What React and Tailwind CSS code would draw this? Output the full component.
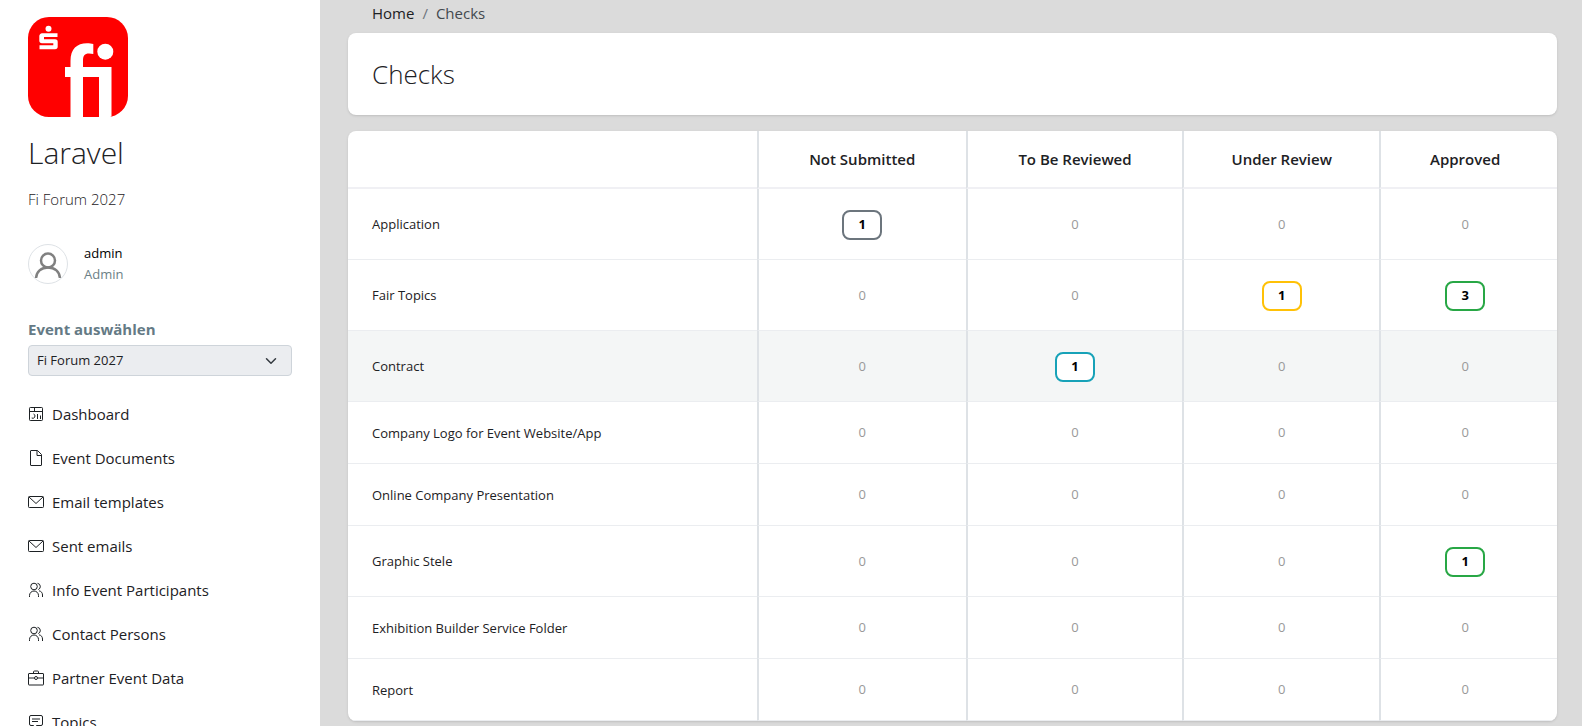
function DashboardIcon() {
    return (
        <svg className="size-4 shrink-0" viewBox="0 0 16 16" fill="none" stroke="currentColor" aria-hidden="true">
            <rect x="1.5" y="1.5" width="13" height="13" rx="0.8" />
            <path d="M1.5 5.5h13M6.5 1.5v4" />
            <path d="M5.5 8a2.2 2.2 0 1 1-1.8 4M9.5 8v5M12.5 9.500V13" />
        </svg>
    )
}

function FileIcon() {
    return (
        <svg className="size-4 shrink-0" viewBox="0 0 16 16" fill="none" stroke="currentColor" strokeLinejoin="round" aria-hidden="true">
            <path d="M9.500 0.500h-6.500a.5.5 0 0 0-.5.5v14a.5.5 0 0 0 .5.5h10a.5.5 0 0 0 .5-.5V4.500zM9 0.500V5.500h4.500" />
        </svg>
    )
}

function MailIcon() {
    return (
        <svg className="size-4 shrink-0" viewBox="0 0 16 16" fill="none" stroke="currentColor" aria-hidden="true">
            <rect x="0.5" y="2.500" width="15" height="11" rx="0.8" />
            <path d="m1 3 7 6.500L15 3" />
        </svg>
    )
}

function UsersIcon() {
    return (
        <svg className="size-4 shrink-0" viewBox="0 0 16 16" fill="none" stroke="currentColor" aria-hidden="true">
            <circle cx="6" cy="4.5" r="3.3" />
            <path d="M1.5 15v-1.500a4.500 4.500 0 0 1 9 0V15" />
            <path d="M9.500 1.300a3.300 3.300 0 0 1 .8 6.300M11 8.800c2.300.5 3.500 2 3.500 4.200v2" />
        </svg>
    )
}

function BriefcaseIcon() {
    return (
        <svg className="size-4 shrink-0" viewBox="0 0 16 16" fill="none" stroke="currentColor" aria-hidden="true">
            <rect x="0.5" y="3.500" width="15" height="11.500" rx="0.5" />
            <path d="M5.500 3.500V2a1 1 0 0 1 1-1h3a1 1 0 0 1 1 1v1.500M0.5 8h6M9.500 8h6" />
            <circle cx="8" cy="8" r="1.500" />
        </svg>
    )
}

function ChatIcon() {
    return (
        <svg className="size-4 shrink-0" viewBox="0 0 16 16" fill="none" stroke="currentColor" aria-hidden="true">
            <path d="M3 1.500h10A1.500 1.500 0 0 1 14.500 3v7A1.500 1.500 0 0 1 13 11.500H8.500L5.500 14.500v-3H3A1.500 1.500 0 0 1 1.500 10V3A1.500 1.500 0 0 1 3 1.500z" />
            <path d="M4 5h8M4 7.500h6" />
        </svg>
    )
}

function Logo() {
    return (
        <svg className="size-[100px]" viewBox="0 0 100 100" role="img" aria-label="Logo">
            <rect width="100" height="100" rx="21" fill="#ff0000" />
            <g fill="#ffffff">
                <circle cx="20.500" cy="11.700" r="3" />
                <path d="M14.500 16.300H29.500V20H16V22.200H27A2.700 2.700 0 0 1 29.700 25V29.500A2.700 2.700 0 0 1 27 32.200H11.500V28.300H25.300V26.200H14A2.700 2.700 0 0 1 11.300 23.500V19A2.700 2.700 0 0 1 14.500 16.300Z" />
                <circle cx="77.300" cy="34.700" r="8" />
                <path d="M42.500 100V60H37V50H42.500V44C42.500 32 49 26.300 59 26.300C61.500 26.300 63.500 26.500 65.300 27V37C64 36.700 62.500 36.500 61 36.500C56.500 36.500 55 39 55 43.500V50H83.500V99.500L82 100H71V60H55V100Z" />
            </g>
        </svg>
    )
}

const menu = [
    { label: 'Dashboard', Icon: DashboardIcon },
    { label: 'Event Documents', Icon: FileIcon },
    { label: 'Email templates', Icon: MailIcon },
    { label: 'Sent emails', Icon: MailIcon },
    { label: 'Info Event Participants', Icon: UsersIcon },
    { label: 'Contact Persons', Icon: UsersIcon },
    { label: 'Partner Event Data', Icon: BriefcaseIcon },
    { label: 'Topics', Icon: ChatIcon },
]

const columns = ['Not Submitted', 'To Be Reviewed', 'Under Review', 'Approved']

// One border colour per status column
const badgeColors = ['border-[#6c757d]', 'border-[#17a2b8]', 'border-[#ffc107]', 'border-[#28a745]']

const rows = [
    { name: 'Application', counts: [1, 0, 0, 0] },
    { name: 'Fair Topics', counts: [0, 0, 1, 3] },
    { name: 'Contract', counts: [0, 1, 0, 0], active: true },
    { name: 'Company Logo for Event Website/App', counts: [0, 0, 0, 0] },
    { name: 'Online Company Presentation', counts: [0, 0, 0, 0] },
    { name: 'Graphic Stele', counts: [0, 0, 0, 1] },
    { name: 'Exhibition Builder Service Folder', counts: [0, 0, 0, 0] },
    { name: 'Report', counts: [0, 0, 0, 0] },
]

function Sidebar() {
    return (
        <aside className="w-80 shrink-0 bg-white px-7 pt-[17px]">
            <Logo />
            <p className="mt-4 text-[30px] leading-[40px] font-light">Laravel</p>
            <p className="mt-[14px] text-[15px] leading-6 font-light">Fi Forum 2027</p>

            <div className="mt-8 flex items-center gap-4">
                <span className="flex size-10 items-center justify-center rounded-full border border-[#dee2e6] text-[#808080]">
                    <svg className="size-7" viewBox="0 0 28 28" fill="none" stroke="currentColor" strokeWidth="2.500" aria-hidden="true">
                        <circle cx="14" cy="10.500" r="7" />
                        <path d="M2 29C2 21.500 7.500 17.500 14 17.500S26 21.500 26 29" />
                    </svg>
                </span>
                <div className="text-[13px] leading-[21px]">
                    <p className="text-black">admin</p>
                    <p className="text-[#6c7f86]">Admin</p>
                </div>
            </div>

            <label htmlFor="event" className="mt-8 block text-[15px] leading-6 font-bold text-[#647a85]">
                Event auswählen
            </label>
            <div className="relative mt-1">
                <select
                    id="event"
                    className="block h-[31px] w-full appearance-none rounded border border-[#ced4da] bg-[#ebedf0] px-2 text-[13px]"
                >
                    <option>Fi Forum 2027</option>
                </select>
                <svg
                    className="pointer-events-none absolute top-[10px] right-[15px] size-3"
                    viewBox="0 0 16 16"
                    fill="none"
                    stroke="#343a40"
                    strokeWidth="2"
                    strokeLinecap="round"
                    strokeLinejoin="round"
                    aria-hidden="true"
                >
                    <path d="m2 5 6 6 6-6" />
                </svg>
            </div>

            <nav className="mt-4">
                {menu.map(({ label, Icon }) => (
                    <a key={label} href="#" className="flex h-11 items-center gap-2 text-[15px]">
                        <Icon />
                        {label}
                    </a>
                ))}
            </nav>
        </aside>
    )
}

function ChecksTable() {
    return (
        <div className="mt-4 overflow-hidden rounded-lg bg-white shadow">
            <table className="w-full table-fixed border-separate border-spacing-0">
                <colgroup>
                    <col className="w-[33.800%]" />
                    <col className="w-[17.300%]" />
                    <col className="w-[17.900%]" />
                    <col className="w-[16.300%]" />
                    <col />
                </colgroup>
                <thead>
                    <tr className="h-[58px] text-[15px]">
                        <td className="border-b-2 border-[#f0f0f4]"></td>
                        {columns.map(name => (
                            <th
                                key={name}
                                scope="col"
                                className="border-b-2 border-l-2 border-b-[#f0f0f4] border-l-[#dee2e6] font-semibold last:pr-2"
                            >
                                {name}
                            </th>
                        ))}
                    </tr>
                </thead>
                <tbody>
                    {rows.map(row => (
                        <tr
                            key={row.name}
                            className={`text-[13px] ${row.counts.some(n => n > 0) ? 'h-[71px]' : 'h-[62px]'} ${row.active ? 'bg-[#f4f6f6]' : ''}`}
                        >
                            <th scope="row" className="border-b border-[#ebedf0] px-6 pt-[2px] text-left font-normal">
                                {row.name}
                            </th>
                            {row.counts.map((count, i) => (
                                <td
                                    key={columns[i]}
                                    className="border-b border-l-2 border-b-[#ebedf0] border-l-[#dee2e6] pt-px text-center text-[#999999] last:pr-2"
                                >
                                    {count > 0 ? (
                                        <a
                                            href="#"
                                            className={`inline-flex h-[30px] w-10 items-center justify-center rounded-lg border-2 bg-white align-middle font-bold text-black ${badgeColors[i]}`}
                                        >
                                            {count}
                                        </a>
                                    ) : (
                                        count
                                    )}
                                </td>
                            ))}
                        </tr>
                    ))}
                </tbody>
            </table>
        </div>
    )
}

function App() {
    return (
        <div className="flex h-screen overflow-hidden bg-[#dbdbdb] font-['Open_Sans',sans-serif] text-[#1d2124]">
            <Sidebar />
            <main className="min-w-0 flex-1 pr-[25px] pl-7">
                <nav aria-label="Breadcrumb" className="flex h-[33px] gap-2 px-6 pt-px text-[15px] leading-6">
                    <a href="#">Home</a>
                    <span className="text-[#6c757d]">/</span>
                    <span className="text-[#43494e]">Checks</span>
                </nav>
                <header className="rounded-lg bg-white px-6 py-6 shadow">
                    <h1 className="text-[26px] leading-[34px] font-light">Checks</h1>
                </header>
                <ChecksTable />
            </main>
        </div>
    )
}

export default App
